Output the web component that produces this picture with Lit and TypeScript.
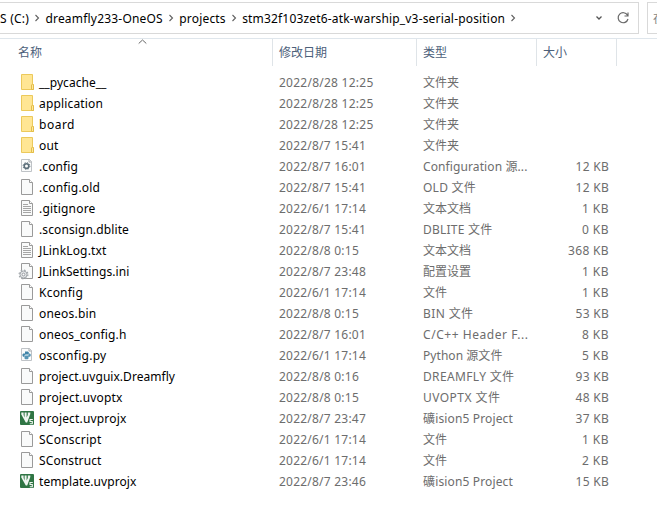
import { LitElement, html, css, svg, PropertyValues } from "lit";
import { customElement, property } from "lit/decorators.js";

/** A run of text that is letter-spaced to take up a given width. */
@customElement("fit-text")
class FitText extends LitElement {
  static styles = css`
    :host { display: inline-block; white-space: pre; }
  `;
  @property() text = "";
  @property({ type: Number }) width = 0;

  protected updated(_: PropertyValues) {
    const span = this.renderRoot.querySelector("span") as HTMLElement;
    span.style.letterSpacing = "0";
    if (!this.width) return;
    const natural = span.getBoundingClientRect().width;
    span.style.letterSpacing = `${(this.width - natural) / this.text.length}px`;
  }
  render() {
    return html`<span>${this.text}</span>`;
  }
}

const page = svg`
  <path d="M3.5 1.500h8l3 3v12h-11z" fill="#f9fafa" stroke="#9a9a9a"/>
  <path d="M11.500 1.500v3h3" fill="#fff" stroke="#9a9a9a"/>`;

const smallPage = svg`
  <path d="M3.500 2.500h8l2 2v10h-10z" fill="#fbfcfc" stroke="#bfc3c7"/>
  <path d="M11 2.500v2.500h2.500" fill="none" stroke="#a5a9ad"/>`;

const icons: Record<string, unknown> = {
  folder: svg`
    <path d="M3.500 1.500h11v9.500l1 .5v5h-12z" fill="#ffe694" stroke="#ecc95b"/>
    <path d="M13.500 16.500v-4.500l1-1 1 1v4.500z" fill="#ffe89c" stroke="#e3bd49"/>`,
  file: page,
  text: svg`${page}
    <path d="M5 5.500h5M5 7.500h8M5 9.500h8M5 11.500h8M5 13.500h8" stroke="#a6a6a6"/>`,
  config: svg`${smallPage}
    <circle cx="8.500" cy="9" r="2.300" fill="none" stroke="#5c6f7a" stroke-width="1.600"/>
    <circle cx="8.500" cy="9" r="3.400" fill="none" stroke="#5c6f7a" stroke-width="1" stroke-dasharray="1.350 1.320"/>`,
  python: svg`${smallPage}
    <path d="M7 5.500h3l.8.8v2.200h-3.300l-1 1v1.300H5.300l-.8-.8V8.300l.8-.8H7z" fill="#3f84a8"/>
    <path d="M11 7.500h.8l.9.8V10l-.9.800H10.500v1.700l-.8.800H7.300l-.8-.8V10.300l.8-.8h3z" fill="#5594b4"/>`,
  settings: svg`${page}
    <circle cx="5.500" cy="12.500" r="3.500" fill="#e6e8ea" stroke="#a3a8ac"/>
    <circle cx="5.500" cy="12.500" r="4.400" fill="none" stroke="#a3a8ac" stroke-width="1.200" stroke-dasharray="1.700 1.756"/>
    <circle cx="5.500" cy="12.500" r="1.400" fill="#fff" stroke="#969b9f"/>`,
  keil: svg`
    <rect x="2" y="2" width="14" height="14" rx="1" fill="#2f7544"/>
    <path d="M3.300 3.500h2.300v2.500l1 2.500V3.500h2v5l1.200-2.500v-2.500h2.500v1.500L9.200 13.500H7.800L3.300 5.500z" fill="#f0f6f1"/>
    <path d="M14.800 10.500h-2.800v2h2.300v2.300h-2.500" fill="none" stroke="#f0f6f1" stroke-width="1.100"/>`,
};

// name, name width, icon, date, type, type width, size
type Row = [string, number, string, string, string, number, string];
const rows: Row[] = [
  ["__pycache__", 67.5, "folder", "2022/8/28 12:25", "文件夹", 36, ""],
  ["application", 64, "folder", "2022/8/28 12:25", "文件夹", 36, ""],
  ["board", 36, "folder", "2022/8/28 12:25", "文件夹", 36, ""],
  ["out", 19.5, "folder", "2022/8/7 15:41", "文件夹", 36, ""],
  [".config", 39, "config", "2022/8/7 16:01", "Configuration 源...", 104.5, "12 KB"],
  [".config.old", 61, "file", "2022/8/7 15:41", "OLD 文件", 53, "12 KB"],
  [".gitignore", 56.5, "text", "2022/6/1 17:14", "文本文档", 48, "1 KB"],
  [".sconsign.dblite", 90, "file", "2022/8/7 15:41", "DBLITE 文件", 69.5, "0 KB"],
  ["JLinkLog.txt", 67.5, "text", "2022/8/8 0:15", "文本文档", 48, "368 KB"],
  ["JLinkSettings.ini", 90.5, "settings", "2022/8/7 23:48", "配置设置", 48, "1 KB"],
  ["Kconfig", 44, "file", "2022/6/1 17:14", "文件", 24, "1 KB"],
  ["oneos.bin", 57.5, "file", "2022/8/8 0:15", "BIN 文件", 50.5, "53 KB"],
  ["oneos_config.h", 87.5, "file", "2022/8/7 16:01", "C/C++ Header F...", 105.5, "8 KB"],
  ["osconfig.py", 67.5, "python", "2022/6/1 17:14", "Python 源文件", 79.5, "5 KB"],
  ["project.uvguix.Dreamfly", 136, "file", "2022/8/8 0:16", "DREAMFLY 文件", 91.5, "93 KB"],
  ["project.uvoptx", 83.5, "file", "2022/8/8 0:15", "UVOPTX 文件", 77.5, "48 KB"],
  ["project.uvprojx", 87.5, "keil", "2022/8/7 23:47", "礦ision5 Project", 90, "37 KB"],
  ["SConscript", 62.5, "file", "2022/6/1 17:14", "文件", 24, "1 KB"],
  ["SConstruct", 62.5, "file", "2022/6/1 17:14", "文件", 24, "2 KB"],
  ["template.uvprojx", 97.5, "keil", "2022/8/7 23:46", "礦ision5 Project", 90, "15 KB"],
];

const dateWidth = (d: string) => ({ 15: 94.5, 14: 87, 13: 80 })[d.length] ?? 0;
const sizeWidth = (s: string) => ({ 4: 27, 5: 33.5, 6: 41 })[s.length] ?? 0;

@customElement("app-root")
class AppRoot extends LitElement {
  static styles = css`
    :host {
      display: block;
      width: 657px;
      height: 512px;
      overflow: hidden;
      background: #fff;
      color: #000;
      font: 12px/21px "Noto Sans", "Noto Sans CJK SC", sans-serif;
      white-space: nowrap;
    }
    svg { display: block; fill: none; flex: none; }
    .bar { display: flex; height: 36px; padding-top: 2px; box-sizing: border-box; }
    .address {
      display: flex;
      flex: none;
      align-items: center;
      box-sizing: border-box;
      width: 639px;
      height: 32px;
      border: 1px solid #d9d9d9;
      border-left: 0;
    }
    .sep { width: 16.4px; display: flex; justify-content: center; }
    .spring { flex: 1; }
    .drop { margin-right: 13px; }
    .reload { margin-right: 8px; }
    .search {
      box-sizing: border-box;
      width: 30px;
      height: 32px;
      margin-left: 8px;
      padding: 5px 0 0 5px;
      border: 1px solid #d9d9d9;
      color: #858585;
      flex: none;
    }
    .head {
      position: relative;
      display: flex;
      margin-top: 2px;
      height: 28px;
      box-sizing: border-box;
      border-top: 1px solid #dfe6ec;
      color: #4c607a;
      line-height: 28px;
    }
    .col { box-sizing: border-box; border-right: 1px solid #dfe4e8; padding-left: 6px; }
    .c1 { width: 273px; padding-left: 18px; }
    .c2 { width: 144px; }
    .c3 { width: 120px; }
    .c4 { width: 80px; }
    .sort { position: absolute; left: 138px; top: 0; }
    .list { padding-top: 6px; }
    .row {
      display: grid;
      grid-template-columns: 21px 240px 144px 110px 76px;
      padding-left: 18px;
      height: 21px;
      color: #6d6d6d;
    }
    .icon { margin-top: 1px; }
    .name { color: #000; }
    .size { text-align: right; }
  `;

  private chevron() {
    return html`<span class="sep"><svg width="6" height="8" viewBox="0 0 6 8">
      <path d="M1.500 1l3 3-3 3" stroke="#606060" stroke-width="1.100" /></svg></span>`;
  }

  render() {
    return html`
      <div class="bar">
        <div class="address">
          <fit-text text="S (C:)" width="29"></fit-text>${this.chevron()}
          <fit-text text="dreamfly233-OneOS" width="117.500"></fit-text>${this.chevron()}
          <fit-text text="projects" width="46.500"></fit-text>${this.chevron()}
          <fit-text text="stm32f103zet6-atk-warship_v3-serial-position" width="263"></fit-text>${this.chevron()}
          <span class="spring"></span>
          <svg class="drop" width="8" height="8" viewBox="0 0 8 8">
            <path d="M1.500 2.500l2.500 2.500 2.500-2.500" stroke="#555" stroke-width="1.300" />
          </svg>
          <svg class="reload" width="14" height="14" viewBox="0 0 14 14">
            <path d="M11.500 4.200A5 5 0 1 0 12 8M12 1.500v3.500H8.500" stroke="#686868" stroke-width="1.200" />
          </svg>
        </div>
        <div class="search">在</div>
      </div>
      <div class="head">
        <svg class="sort" width="9" height="6" viewBox="0 0 9 6">
          <path d="M.700 4.500l3.800-3.500 3.800 3.500" stroke="#666" />
        </svg>
        <div class="col c1">名称</div>
        <div class="col c2">修改日期</div>
        <div class="col c3">类型</div>
        <div class="col c4">大小</div>
      </div>
      <div class="list">
        ${rows.map(
          ([name, nw, icon, date, type, tw, size]) => html`
            <div class="row">
              <svg class="icon" width="18" height="18" viewBox="0 0 18 18">${icons[icon]}</svg>
              <fit-text class="name" .text=${name} .width=${nw}></fit-text>
              <fit-text .text=${date} .width=${dateWidth(date)}></fit-text>
              <fit-text .text=${type} .width=${tw}></fit-text>
              <fit-text class="size" .text=${size} .width=${sizeWidth(size)}></fit-text>
            </div>
          `
        )}
      </div>
    `;
  }
}
